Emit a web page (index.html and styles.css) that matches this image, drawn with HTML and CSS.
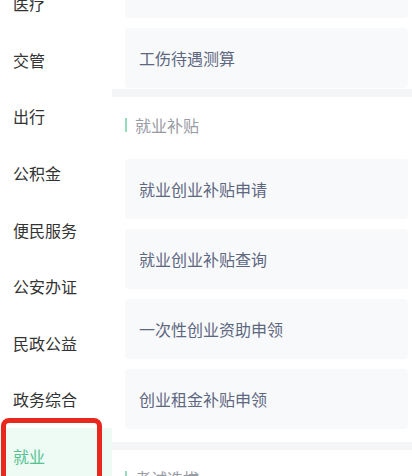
FILE: index.html
```html
<!DOCTYPE html>
<html lang="zh-CN">
<head>
<meta charset="utf-8">
<title>服务分类</title>
<link rel="stylesheet" href="styles.css">
</head>
<body>
<div class="page">
  <nav class="sidebar">
    <ul class="menu">
      <li class="menu-item">医疗</li>
      <li class="menu-item">交管</li>
      <li class="menu-item">出行</li>
      <li class="menu-item">公积金</li>
      <li class="menu-item">便民服务</li>
      <li class="menu-item">公安办证</li>
      <li class="menu-item">民政公益</li>
      <li class="menu-item">政务综合</li>
      <li class="menu-item active">就业</li>
    </ul>
    <div class="highlight-box"></div>
  </nav>
  <main class="content">
    <section class="group group-first">
      <div class="card"><span class="card-text">工伤保险待遇申领</span></div>
      <div class="card"><span class="card-text">工伤待遇测算</span></div>
    </section>
    <section class="group">
      <h3 class="group-title"><span class="title-bar"></span>就业补贴</h3>
      <div class="card"><span class="card-text">就业创业补贴申请</span></div>
      <div class="card"><span class="card-text">就业创业补贴查询</span></div>
      <div class="card"><span class="card-text">一次性创业资助申领</span></div>
      <div class="card"><span class="card-text">创业租金补贴申领</span></div>
    </section>
    <section class="group">
      <h3 class="group-title"><span class="title-bar"></span>考试选拔</h3>
      <div class="card"><span class="card-text">考试报名</span></div>
    </section>
  </main>
</div>
</body>
</html>
```
FILE: styles.css
```css
* {
  box-sizing: border-box;
}

html, body {
  margin: 0;
  padding: 0;
  background: #ffffff;
}

body {
  font-family: "Noto Sans CJK SC", "Noto Sans", sans-serif;
}

.page {
  display: flex;
  width: 412px;
  height: 476px;
  overflow: hidden;
}

.sidebar {
  position: relative;
  width: 112px;
  flex: 0 0 112px;
  background: #ffffff;
}

.menu {
  list-style: none;
  margin: -25px 0 0 0;
  padding: 0;
}

.menu-item {
  height: 56.6px;
  display: flex;
  align-items: center;
  padding-left: 13px;
  font-size: 16px;
  color: #333333;
  line-height: 1;
}

.menu-item.active {
  background: #eefaf4;
  color: #55c28f;
}

.highlight-box {
  position: absolute;
  left: 1px;
  top: 418px;
  width: 101px;
  height: 80px;
  border: 5px solid #e8281d;
  border-radius: 8px;
}

.content {
  flex: 1;
  background: #f4f5f7;
  display: flex;
  flex-direction: column;
  gap: 8px;
}

.group {
  background: #ffffff;
  padding: 0 4px 13px 13px;
  display: flex;
  flex-direction: column;
  gap: 10px;
}

.group-first {
  margin-top: -42px;
  padding-bottom: 1px;
}

.group-title {
  margin: 0 0 12px 0;
  padding-top: 16px;
  height: 40px;
  display: flex;
  align-items: center;
  font-size: 16px;
  font-weight: normal;
  color: #979ba3;
  line-height: 22px;
}

.title-bar {
  width: 2px;
  height: 14px;
  background: #95dcbb;
  margin-right: 8px;
}

.card {
  height: 60px;
  background: #f8f9fb;
  border-radius: 4px;
  display: flex;
  align-items: center;
  padding-left: 14px;
}

.card-text {
  font-size: 16px;
  color: #5d6780;
  line-height: 1;
}
```
